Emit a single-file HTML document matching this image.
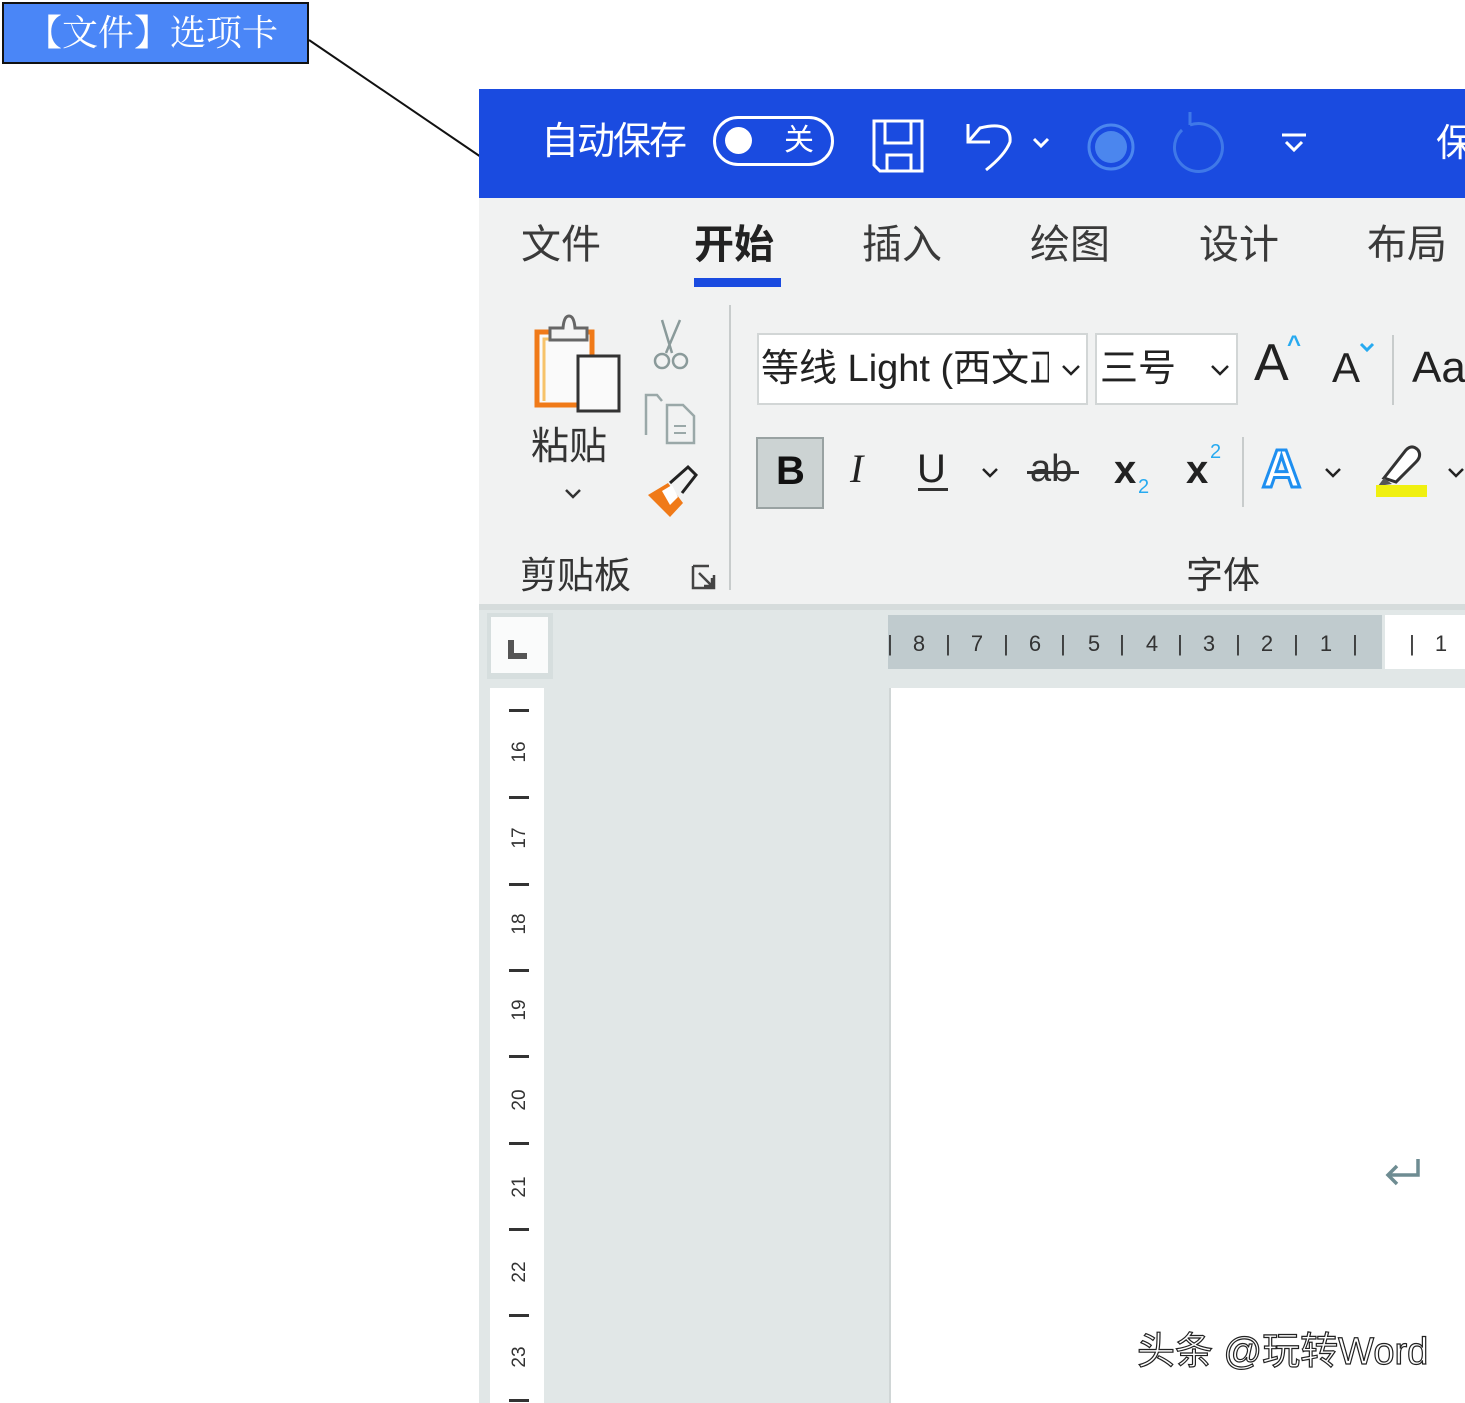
<!DOCTYPE html>
<html><head><meta charset="utf-8"><style>
*{margin:0;padding:0;box-sizing:border-box}
body{width:1465px;height:1403px;position:relative;overflow:hidden;background:#fff;font-family:"Liberation Sans","Noto Sans CJK SC",sans-serif}
.a{position:absolute;white-space:nowrap}
.tab{position:absolute;top:218px;font-size:40px;color:#3a3a3a;line-height:54px}
.rn{position:absolute;left:506px;width:28px;text-align:center;font-size:19px;color:#333;transform:rotate(-90deg);line-height:22px}
.rt{position:absolute;left:509px;width:20px;height:3px;background:#333}
.hn{position:absolute;top:630px;font-size:22px;color:#333;line-height:28px;width:20px;text-align:center}
</style></head><body>
<!-- label -->
<div class="a" style="left:2px;top:2px;width:307px;height:62px;background:#4a86f7;border:2px solid #111;color:#fff;font-family:'Liberation Serif','Noto Serif CJK SC',serif;font-size:36px;line-height:58px;padding-left:22px">【文件】选项卡</div>
<svg class="a" style="left:0;top:0" width="490" height="170"><line x1="309" y1="40" x2="481" y2="157" stroke="#111" stroke-width="2"/></svg>

<!-- title bar -->
<div class="a" style="left:479px;top:89px;width:986px;height:109px;background:#1a4be0"></div>
<div class="a" style="left:541px;top:116px;font-size:38px;color:#fff;line-height:52px;letter-spacing:-2px">自动保存</div>
<div class="a" style="left:713px;top:116px;width:121px;height:50px;border:3px solid #fff;border-radius:25px"></div>
<div class="a" style="left:725px;top:127px;width:27px;height:27px;border-radius:50%;background:#fff"></div>
<div class="a" style="left:784px;top:119px;font-size:30px;color:#fff;line-height:44px">关</div>
<svg class="a" style="left:850px;top:100px" width="470" height="90" fill="none" stroke="#fff" stroke-width="3">
<path d="M24 21 H72 V71 H30 L24 65 Z"/><path d="M35 21 V43 H61 V21"/><path d="M37 71 V55 H61 V71"/>
<path d="M118 24 V42 H140"/><path d="M118 42 L130 28 Q162 20 160 42 Q155 55 136 70"/>
<path d="M184 39 L191 46 L198 39"/>
<circle cx="261" cy="47" r="22" stroke="#4b86ee" stroke-width="3"/><circle cx="261" cy="47" r="16" fill="#4b86ee" stroke="none"/>
<path d="M340 25 A24 24 0 1 1 332 30" stroke="#3f78e8"/><path d="M340 25 V12" stroke="#3f78e8"/>
<path d="M432 35 H456" /><path d="M436 42 L444 50 L452 42"/>
</svg>
<div class="a" style="left:1436px;top:118px;font-size:38px;color:#fff;line-height:52px">保</div>

<!-- ribbon -->
<div class="a" style="left:479px;top:198px;width:986px;height:406px;background:#f1f2f2"></div>
<div class="tab" style="left:521px">文件</div>
<div class="tab" style="left:694px;font-weight:bold;color:#222">开始</div>
<div class="a" style="left:694px;top:278px;width:87px;height:9px;background:#1a4be0"></div>
<div class="tab" style="left:862px">插入</div>
<div class="tab" style="left:1030px">绘图</div>
<div class="tab" style="left:1199px">设计</div>
<div class="tab" style="left:1367px">布局</div>

<svg class="a" style="left:520px;top:305px" width="210" height="220" fill="none">
<rect x="17" y="27" width="55" height="73" fill="#fafafa" stroke="#f07a18" stroke-width="5"/><path d="M24 96 V34 H66" stroke="#f7c36a" stroke-width="3"/>
<path d="M30 35 V23 H43 Q44 11 49 11 Q54 11 55 23 H67 V35 Z" stroke="#666" stroke-width="3" fill="#f4f4f4"/>
<rect x="58" y="51" width="41" height="55" stroke="#333" stroke-width="3" fill="#fafafa"/>
<path d="M142 15 L152 48 M160 15 L146 48" stroke="#8a9a9a" stroke-width="2.5"/><circle cx="142" cy="56" r="7" stroke="#8a9a9a" stroke-width="2.5"/><circle cx="160" cy="56" r="7" stroke="#8a9a9a" stroke-width="2.5"/>
<path d="M126 130 V90 H137 L142 96" stroke="#9aa8a8" stroke-width="2.5"/><path d="M147 100 H163 L174 111 V138 H147 Z" stroke="#9aa8a8" stroke-width="2.5"/><path d="M154 121 H166 M154 128 H166" stroke="#9aa8a8" stroke-width="2"/>
<path d="M128 190 L148 178 L163 198 L150 212 Z" fill="#f07a18"/><path d="M142 186 L152 180 L158 192 L150 200 Z" fill="#fff"/><path d="M150 178 L168 162 L176 170 L162 188" stroke="#222" stroke-width="3"/>
</svg>
<div class="a" style="left:531px;top:422px;font-size:38px;color:#333;line-height:50px">粘贴</div>
<svg class="a" style="left:563px;top:486px" width="20" height="14" fill="none" stroke="#333" stroke-width="2.5"><path d="M3 4 L10 11 L17 4"/></svg>
<div class="a" style="left:520px;top:552px;font-size:37px;color:#333;line-height:48px">剪贴板</div>
<svg class="a" style="left:690px;top:563px" width="30" height="30" fill="none" stroke="#444" stroke-width="2.5"><path d="M3 3 H19 M3 3 V25 H24 V12"/><path d="M9 10 L22 23 M22 15 V23 H14"/></svg>
<div class="a" style="left:729px;top:305px;width:2px;height:285px;background:#c8cccc"></div>

<div class="a" style="left:757px;top:333px;width:331px;height:72px;background:#fff;border:2px solid #d2d6d6"></div>
<div class="a" style="left:761px;top:343px;font-size:38px;color:#222;line-height:52px;width:288px;overflow:hidden">等线 Light (西文正文)</div>
<svg class="a" style="left:1060px;top:362px" width="22" height="16" fill="none" stroke="#222" stroke-width="2.5"><path d="M3 4 L11 12 L19 4"/></svg>
<div class="a" style="left:1095px;top:333px;width:143px;height:72px;background:#fff;border:2px solid #d2d6d6"></div>
<div class="a" style="left:1100px;top:343px;font-size:38px;color:#222;line-height:52px">三号</div>
<svg class="a" style="left:1209px;top:362px" width="22" height="16" fill="none" stroke="#222" stroke-width="2.5"><path d="M3 4 L11 12 L19 4"/></svg>
<div class="a" style="left:1254px;top:333px;font-size:52px;color:#222;line-height:60px">A</div>
<div class="a" style="left:1287px;top:330px;font-size:24px;color:#27aaf0;line-height:30px;font-weight:bold">^</div>
<div class="a" style="left:1332px;top:343px;font-size:42px;color:#222;line-height:50px">A</div>
<svg class="a" style="left:1358px;top:342px" width="18" height="12" fill="none" stroke="#27aaf0" stroke-width="3"><path d="M3 2 L9 8 L15 2"/></svg>
<div class="a" style="left:1392px;top:335px;width:2px;height:70px;background:#c8cccc"></div>
<div class="a" style="left:1412px;top:340px;font-size:44px;color:#222;line-height:56px">Aa</div>

<div class="a" style="left:756px;top:437px;width:68px;height:72px;background:#ccd3d3;border:2px solid #99a2a2"></div>
<div class="a" style="left:776px;top:446px;font-size:40px;font-weight:bold;color:#111;line-height:50px">B</div>
<div class="a" style="left:850px;top:444px;font-size:40px;font-style:italic;font-family:'Liberation Serif',serif;color:#222;line-height:50px">I</div>
<div class="a" style="left:917px;top:444px;font-size:40px;color:#222;line-height:50px">U</div>
<div class="a" style="left:918px;top:488px;width:30px;height:3px;background:#333"></div>
<svg class="a" style="left:980px;top:466px" width="20" height="14" fill="none" stroke="#222" stroke-width="2.5"><path d="M3 3 L10 10 L17 3"/></svg>
<div class="a" style="left:1030px;top:444px;font-size:38px;color:#333;line-height:50px">ab</div>
<div class="a" style="left:1027px;top:471px;width:52px;height:3px;background:#333"></div>
<div class="a" style="left:1114px;top:445px;font-size:40px;font-weight:bold;color:#222;line-height:50px">x</div>
<div class="a" style="left:1138px;top:475px;font-size:20px;color:#27aaf0;line-height:24px">2</div>
<div class="a" style="left:1186px;top:445px;font-size:40px;font-weight:bold;color:#222;line-height:50px">x</div>
<div class="a" style="left:1210px;top:440px;font-size:20px;color:#27aaf0;line-height:24px">2</div>
<div class="a" style="left:1242px;top:437px;width:2px;height:70px;background:#c8cccc"></div>
<div class="a" style="left:1262px;top:438px;font-size:54px;font-weight:bold;color:#fff;-webkit-text-stroke:3px #1e8ff0;line-height:62px">A</div>
<svg class="a" style="left:1323px;top:466px" width="20" height="14" fill="none" stroke="#222" stroke-width="2.5"><path d="M3 3 L10 10 L17 3"/></svg>
<svg class="a" style="left:1372px;top:440px" width="60" height="60" fill="none"><path d="M12 38 L34 10 Q40 4 46 10 Q50 16 44 22 L24 42 Z" stroke="#333" stroke-width="3" fill="#fff"/><path d="M12 38 L6 46 L20 44 Z" fill="#555"/><rect x="4" y="45" width="51" height="12" fill="#f0f010"/></svg>
<svg class="a" style="left:1446px;top:466px" width="20" height="14" fill="none" stroke="#222" stroke-width="2.5"><path d="M3 3 L10 10 L17 3"/></svg>
<div class="a" style="left:1186px;top:552px;font-size:37px;color:#333;line-height:48px">字体</div>

<!-- document area -->
<div class="a" style="left:479px;top:604px;width:986px;height:799px;background:#e1e7e7"></div>
<div class="a" style="left:479px;top:604px;width:986px;height:6px;background:#d6dcdc"></div>
<div class="a" style="left:487px;top:613px;width:66px;height:66px;background:#d6dede"></div>
<div class="a" style="left:491px;top:617px;width:57px;height:56px;background:#fafbfb"></div>
<div class="a" style="left:508px;top:640px;width:6px;height:19px;background:#555"></div>
<div class="a" style="left:508px;top:653px;width:19px;height:6px;background:#555"></div>
<div class="a" style="left:888px;top:615px;width:494px;height:54px;background:#c0cbce"></div>
<div class="a" style="left:1385px;top:615px;width:80px;height:54px;background:#fff"></div>
<div class="hn" style="left:880px">|</div><div class="hn" style="left:909px">8</div>
<div class="hn" style="left:938px">|</div><div class="hn" style="left:967px">7</div>
<div class="hn" style="left:996px">|</div><div class="hn" style="left:1025px">6</div>
<div class="hn" style="left:1053px">|</div><div class="hn" style="left:1084px">5</div>
<div class="hn" style="left:1112px">|</div><div class="hn" style="left:1142px">4</div>
<div class="hn" style="left:1170px">|</div><div class="hn" style="left:1199px">3</div>
<div class="hn" style="left:1228px">|</div><div class="hn" style="left:1257px">2</div>
<div class="hn" style="left:1286px">|</div><div class="hn" style="left:1316px">1</div>
<div class="hn" style="left:1345px">|</div>
<div class="hn" style="left:1402px">|</div><div class="hn" style="left:1431px">1</div>
<div class="a" style="left:490px;top:688px;width:54px;height:715px;background:#fff"></div>
<div class="a" style="left:891px;top:688px;width:574px;height:715px;background:#fff"></div>
<div class="a" style="left:889px;top:688px;width:2px;height:715px;background:#d0d6d6"></div>

<div class="rt" style="top:709px"></div><div class="rn" style="top:741px">16</div>
<div class="rt" style="top:796px"></div><div class="rn" style="top:827px">17</div>
<div class="rt" style="top:883px"></div><div class="rn" style="top:913px">18</div>
<div class="rt" style="top:969px"></div><div class="rn" style="top:999px">19</div>
<div class="rt" style="top:1055px"></div><div class="rn" style="top:1089px">20</div>
<div class="rt" style="top:1142px"></div><div class="rn" style="top:1176px">21</div>
<div class="rt" style="top:1228px"></div><div class="rn" style="top:1261px">22</div>
<div class="rt" style="top:1314px"></div><div class="rn" style="top:1346px">23</div>
<div class="rt" style="top:1399px"></div>

<svg class="a" style="left:1383px;top:1155px" width="40" height="35" fill="none" stroke="#6e8c92" stroke-width="3.5"><path d="M35 4 V20 H6"/><path d="M14 11 L5 20 L14 29"/></svg>
<div class="a" style="left:1137px;top:1328px;font-size:38px;color:#fff;-webkit-text-stroke:1.2px #222;line-height:48px">头条 @玩转Word</div>
</body></html>
